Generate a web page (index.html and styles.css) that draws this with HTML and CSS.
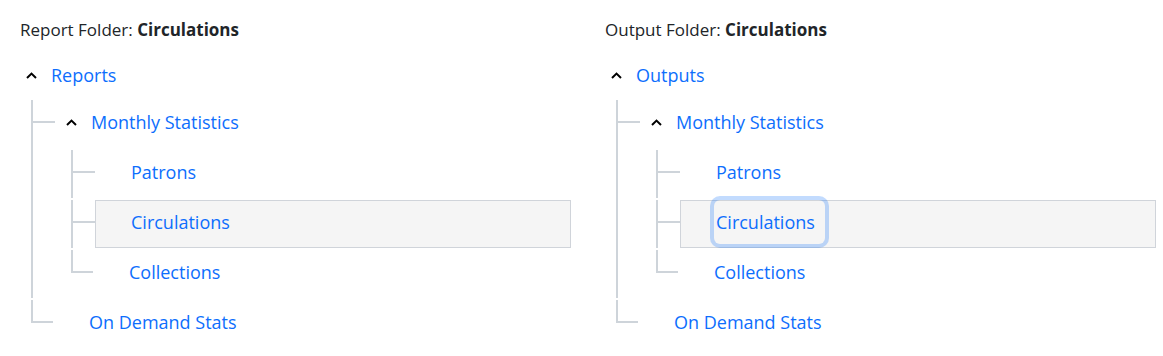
FILE: index.html
```html
<!DOCTYPE html>
<html lang="en">
<head>
  <meta charset="UTF-8" />
  <meta name="viewport" content="width=device-width, initial-scale=1.0"/>
  <title>Folders</title>
  <link rel="stylesheet" href="styles.css">
</head>
<body>

  <main class="panels">

    <section class="panel">
      <p class="folder-title">Report Folder: <strong>Circulations</strong></p>
      <ul class="tree">
        <li class="tree-root">
          <div class="row">
            <div class="node">
              <span class="toggle"><svg width="11" height="7" viewBox="0 0 11 7"><path d="M1 6 L5.5 1.6 L10 6" /></svg></span>
              <a class="label" href="#">Reports</a>
            </div>
          </div>
          <ul class="children">
            <li>
              <div class="row">
                <span class="branch"></span>
                <div class="node">
                  <span class="toggle"><svg width="11" height="7" viewBox="0 0 11 7"><path d="M1 6 L5.5 1.6 L10 6" /></svg></span>
                  <a class="label" href="#">Monthly Statistics</a>
                </div>
              </div>
              <ul class="children">
                <li>
                  <div class="row">
                    <span class="branch"></span>
                    <div class="node"><span class="toggle"></span><a class="label" href="#">Patrons</a></div>
                  </div>
                </li>
                <li>
                  <div class="row">
                    <span class="branch"></span>
                    <div class="node selected"><span class="toggle"></span><a class="label" href="#">Circulations</a></div>
                  </div>
                </li>
                <li class="last">
                  <div class="row">
                    <span class="branch"></span>
                    <div class="node"><span class="toggle"></span><a class="label" href="#">Collections</a></div>
                  </div>
                </li>
              </ul>
            </li>
            <li class="last">
              <div class="row">
                <span class="branch"></span>
                <div class="node"><span class="toggle"></span><a class="label" href="#">On Demand Stats</a></div>
              </div>
            </li>
          </ul>
        </li>
      </ul>
    </section>

    <section class="panel">
      <p class="folder-title">Output Folder: <strong>Circulations</strong></p>
      <ul class="tree">
        <li class="tree-root">
          <div class="row">
            <div class="node">
              <span class="toggle"><svg width="11" height="7" viewBox="0 0 11 7"><path d="M1 6 L5.5 1.6 L10 6" /></svg></span>
              <a class="label" href="#">Outputs</a>
            </div>
          </div>
          <ul class="children">
            <li>
              <div class="row">
                <span class="branch"></span>
                <div class="node">
                  <span class="toggle"><svg width="11" height="7" viewBox="0 0 11 7"><path d="M1 6 L5.5 1.6 L10 6" /></svg></span>
                  <a class="label" href="#">Monthly Statistics</a>
                </div>
              </div>
              <ul class="children">
                <li>
                  <div class="row">
                    <span class="branch"></span>
                    <div class="node"><span class="toggle"></span><a class="label" href="#">Patrons</a></div>
                  </div>
                </li>
                <li>
                  <div class="row">
                    <span class="branch"></span>
                    <div class="node selected"><span class="toggle"></span><a class="label focused" href="#">Circulations</a></div>
                  </div>
                </li>
                <li class="last">
                  <div class="row">
                    <span class="branch"></span>
                    <div class="node"><span class="toggle"></span><a class="label" href="#">Collections</a></div>
                  </div>
                </li>
              </ul>
            </li>
            <li class="last">
              <div class="row">
                <span class="branch"></span>
                <div class="node"><span class="toggle"></span><a class="label" href="#">On Demand Stats</a></div>
              </div>
            </li>
          </ul>
        </li>
      </ul>
    </section>

  </main>

</body>
</html>
```

FILE: styles.css
```css
:root {
  --text: #212529;
  --link: #0d6efd;
  --line: #ced4da;
  --selected-bg: #f5f5f5;
  --selected-border: #d0d4da;
}

* {
  box-sizing: border-box;
  margin: 0;
  padding: 0;
}

body {
  font-family: 'Open Sans', sans-serif;
  color: var(--text);
  background: #fff;
  padding: 18px 7px 0 15px;
}

.panels {
  display: grid;
  grid-template-columns: 1fr 1fr;
  column-gap: 29px;
}

.folder-title {
  font-size: 17px;
  line-height: 24px;
  margin: 0 0 8px 5px;
}

.folder-title strong {
  font-weight: 700;
}

ul {
  list-style: none;
}

.tree-root > .children {
  margin-left: 16px;
}

.children .children {
  margin-left: 38px;
}

.children > li {
  margin-top: 2px;
  border-left: 2px solid var(--line);
}

.children > li.last {
  border-left: none;
}

.row {
  display: flex;
  height: 48px;
}

.branch {
  flex-shrink: 0;
  width: 22px;
  height: 2px;
  margin-top: 21px;
  background: var(--line);
}

li.last > .row > .branch {
  height: 23px;
  margin-top: 0;
  background: none;
  border-left: 2px solid var(--line);
  border-bottom: 2px solid var(--line);
}

.node {
  flex: 1;
  display: flex;
  align-items: center;
  height: 48px;
  border: 1px solid transparent;
  padding-bottom: 4px;
}

.tree-root > .row > .node {
  padding: 2px 0 0;
}

.node.selected {
  background: var(--selected-bg);
  border-color: var(--selected-border);
}

.toggle {
  flex-shrink: 0;
  width: 30px;
  display: flex;
  align-items: center;
  justify-content: center;
}

.toggle path {
  fill: none;
  stroke: #000;
  stroke-width: 2;
}

.label {
  display: flex;
  align-items: center;
  height: 44px;
  margin-left: 3px;
  padding: 0 10px 0 2px;
  font-size: 18px;
  color: var(--link);
  text-decoration: none;
  border-radius: 6px;
}

.label.focused {
  box-shadow: 0 0 0 4px rgba(13, 110, 253, 0.25);
}
```
